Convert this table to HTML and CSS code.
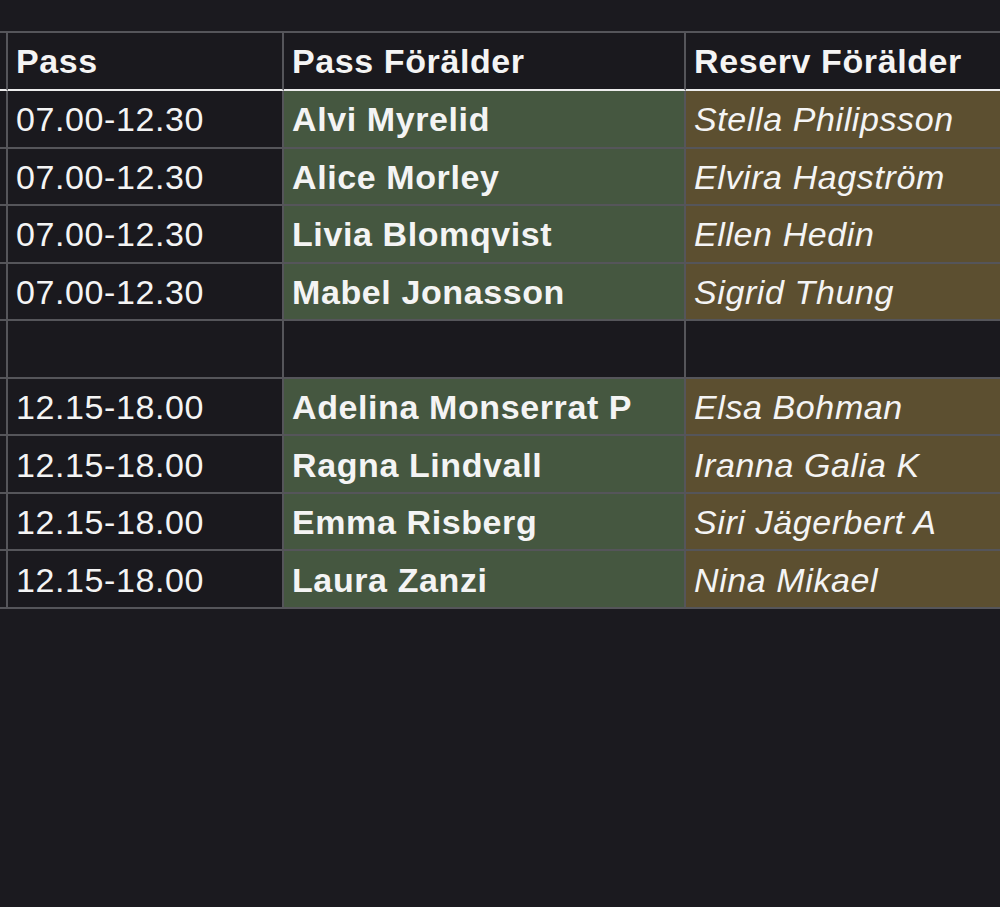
FILE: index.html
```html
<!DOCTYPE html>
<html lang="sv">
<head>
<meta charset="utf-8">
<title>Schema</title>
<link rel="stylesheet" href="styles.css">
</head>
<body>
<div class="sheet">
  <div class="grid">
    <div class="cell head stub"></div>
    <div class="cell head">Pass</div>
    <div class="cell head">Pass Förälder</div>
    <div class="cell head">Reserv Förälder</div>

    <div class="cell stub"></div><div class="cell time">07.00-12.30</div><div class="cell main">Alvi Myrelid</div><div class="cell res">Stella Philipsson</div>
    <div class="cell stub"></div><div class="cell time">07.00-12.30</div><div class="cell main">Alice Morley</div><div class="cell res">Elvira Hagström</div>
    <div class="cell stub"></div><div class="cell time">07.00-12.30</div><div class="cell main">Livia Blomqvist</div><div class="cell res">Ellen Hedin</div>
    <div class="cell stub"></div><div class="cell time">07.00-12.30</div><div class="cell main">Mabel Jonasson</div><div class="cell res">Sigrid Thung</div>

    <div class="cell stub"></div><div class="cell"></div><div class="cell"></div><div class="cell"></div>

    <div class="cell stub"></div><div class="cell time">12.15-18.00</div><div class="cell main">Adelina Monserrat P</div><div class="cell res">Elsa Bohman</div>
    <div class="cell stub"></div><div class="cell time">12.15-18.00</div><div class="cell main">Ragna Lindvall</div><div class="cell res">Iranna Galia K</div>
    <div class="cell stub"></div><div class="cell time">12.15-18.00</div><div class="cell main">Emma Risberg</div><div class="cell res">Siri Jägerbert A</div>
    <div class="cell stub"></div><div class="cell time">12.15-18.00</div><div class="cell main">Laura Zanzi</div><div class="cell res">Nina Mikael</div>
  </div>
</div>
</body>
</html>
```

FILE: styles.css
```css
html, body {
  margin: 0;
  padding: 0;
  background: #1b1a1f;
  overflow: hidden;
}

body {
  width: 1000px;
  height: 907px;
  font-family: "Liberation Sans", Arial, Helvetica, sans-serif;
  color: #f4f4f4;
}

.sheet {
  padding-top: 31px;
  overflow: hidden;
  width: 1000px;
}

.grid {
  display: grid;
  grid-template-columns: 8px 276px 402px 402px;
  grid-template-rows: 58px;
  grid-auto-rows: 57.56px;
  width: 1088px;
  border-top: 2px solid #55555a;
}

.cell {
  box-sizing: border-box;
  border-right: 2px solid #55555a;
  border-bottom: 2px solid #55555a;
  background: #1a191e;
  display: flex;
  align-items: center;
  padding-left: 8px;
  padding-top: 2px;
  font-size: 34px;
  letter-spacing: 0.6px;
  white-space: nowrap;
  overflow: hidden;
}

.stub {
  padding-left: 0;
}

.head {
  font-weight: bold;
  padding-top: 0;
  border-bottom-color: #ececec;
}

.time {
  font-weight: normal;
}

.main {
  font-weight: bold;
  background: #455740;
}

.res {
  font-style: italic;
  background: #5c4f30;
}
```
